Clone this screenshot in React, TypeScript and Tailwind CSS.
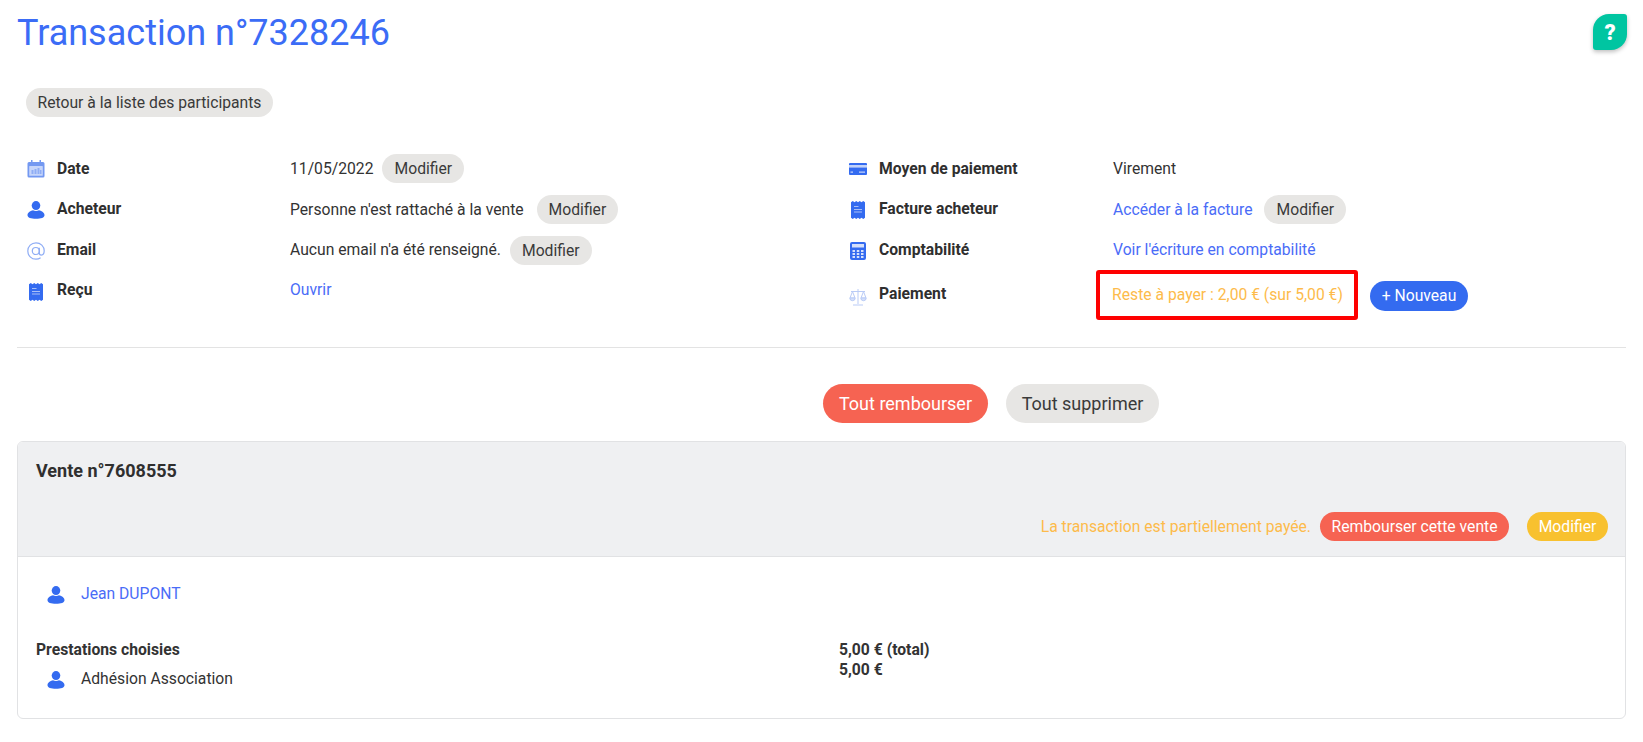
import React from "react";

const blue = "#346bf0";
const light = "#8fadf5";

function UserIcon({ className = "" }: { className?: string }) {
  return (
    <svg viewBox="0 0 18 18" className={className}>
      <ellipse cx="9" cy="4.6" rx="4.3" ry="4.5" fill={blue} />
      <path d="M0.5 14.2C0.5 11.2 4 9.8 6 9.300C7.500 10.300 10.500 10.300 12 9.300C14 9.800 17.500 11.200 17.500 14.200C17.500 16.600 14 17.800 9 17.800C4 17.800 0.500 16.600 0.500 14.200Z" fill={blue} />
    </svg>
  );
}
function CalendarIcon() {
  return (
    <svg viewBox="0 0 18 18" className="w-[18px] h-[18px]">
      <path d="M2 2H4V0h1.500v2h7V0H14v2h2a1.500 1.500 0 0 1 1.500 1.500V16a1.500 1.500 0 0 1-1.500 1.500H2A1.500 1.500 0 0 1 .5 16V3.500A1.500 1.500 0 0 1 2 2Z" fill="#7398f1" />
      <rect x="2.200" y="6" width="13.600" height="9.800" rx="0.600" fill="#c6d5fa" />
      <path d="M4.500 10h2v4h-2zM7.500 9h2v5h-2zM10.500 8h2v6h-2zM13 10h1.500v4H13z" fill="#8fadf5" />
    </svg>
  );
}
function ReceiptIcon() {
  return (
    <svg viewBox="0 0 14 18" className="w-[14px] h-[18px]">
      <path d="M0 1.200 1.750 0 3.500 1.200 5.250 0 7 1.200 8.750 0 10.500 1.200 12.250 0 14 1.200V16.800L12.250 18 10.500 16.800 8.750 18 7 16.800 5.250 18 3.500 16.800 1.750 18 0 16.800Z" fill={blue} />
      <path d="M3 5h4.500v1H3zM3 8h8v1H3zM3 10.500h8v1H3z" fill="#a9bff6" />
    </svg>
  );
}
function AtIcon() {
  return (
    <svg viewBox="0 0 18 18" className="w-[18px] h-[18px]" fill="none" stroke={light} strokeWidth="1.200">
      <path d="M12.300 5.800v5.300c0 1.300.8 2 1.800 2 1.700 0 3.100-1.800 3.100-4.300C17.200 4.300 13.600 .8 9 .8S.8 4.400.8 9s3.600 8.200 8.200 8.200c1.800 0 3.300-.5 4.600-1.400" />
      <circle cx="8.800" cy="9" r="3.500" />
    </svg>
  );
}
function CardIcon() {
  return (
    <svg viewBox="0 0 18 12" className="w-[18px] h-[12px]">
      <path d="M1 0h16a1 1 0 0 1 1 1v1H0V1a1 1 0 0 1 1-1Z" fill={blue} />
      <path d="M0 2h18v2.500H0z" fill="#c2d2f9" />
      <path d="M0 4.500h18V11a1 1 0 0 1-1 1H1a1 1 0 0 1-1-1Z" fill={blue} />
      <path d="M1.500 8.500h2.500v1.200H1.500zM10 8.500h6v1.200h-6z" fill="#c2d2f9" />
    </svg>
  );
}
function CalcIcon() {
  return (
    <svg viewBox="0 0 16 18" className="w-[16px] h-[18px]">
      <rect width="16" height="18" rx="2" fill={blue} />
      <rect x="2" y="2" width="12" height="3.500" fill="#d5e0fb" />
      <path d="M2.500 8h2.500v2H2.500zM6.800 8h2.500v2H6.800zM11 8h2.500v2H11zM2.500 11h2.500v2H2.500zM6.800 11h2.500v2H6.800zM11 11h2.500v2H11zM2.500 14h2.500v2H2.500zM6.800 14h2.500v2H6.800zM11 14h2.500v2H11z" fill="#d5e0fb" />
    </svg>
  );
}
function ScaleIcon() {
  return (
    <svg viewBox="0 0 18 18" className="w-[18px] h-[18px]" fill="none" stroke="#b9cbf6" strokeWidth="1">
      <path d="M9 1v15M2 3.500h14M4 17h10" />
      <path d="M3.500 3.500 1 10h5ZM14.500 3.500 12 10h5Z" />
      <path d="M.8 10a2.700 2.700 0 0 0 5.400 0ZM11.800 10a2.700 2.700 0 0 0 5.400 0Z" fill="#d5e0fb" />
    </svg>
  );
}

function Pill({ children, className = "" }: { children: React.ReactNode; className?: string }) {
  return (
    <span className={`inline-flex items-center justify-center rounded-full whitespace-nowrap ${className}`}>
      {children}
    </span>
  );
}
function Edit() {
  return <Pill className="h-[29px] px-3 bg-[#e7e6e4] text-[#3a3a3a]">Modifier</Pill>;
}

function Row({ icon, label, shift = "" }: { icon: React.ReactNode; label: string; shift?: string }) {
  return (
    <div className="flex items-center">
      <div className="w-[30px] flex justify-center pr-[12px] shrink-0 mt-[2px]">{icon}</div>
      <div className={`font-bold text-[#2f2f2f] ${shift}`}>{label}</div>
    </div>
  );
}

export default function App() {
  return (
    <div className="relative min-h-[742px] bg-white text-[15.7px] text-[#333333] font-['Roboto',sans-serif] overflow-hidden">
      <div className="px-[17px]">
        <h1 className="pt-[11px] text-[36px] leading-[44px] text-[#3b6cf6]">Transaction n°7328246</h1>

        <div className="mt-[33px] ml-[9px]">
          <Pill className="h-[29px] w-[247px] bg-[#e7e6e4] text-[#3a3a3a]">Retour à la liste des participants</Pill>
        </div>

        <div className="mt-[31px] ml-[10px] flex">
          <div className="w-[822px] grid grid-cols-[263px_1fr] grid-rows-[41px_41px_41px_41px] items-center">
            <Row icon={<CalendarIcon />} label="Date" />
            <div className="flex items-center gap-[9px]"><span>11/05/2022</span><Edit /></div>
            <Row icon={<UserIcon className="w-[18px] h-[18px]" />} label="Acheteur" shift="-mt-[2px]" />
            <div className="flex items-center gap-[13px]"><span>Personne n'est rattaché à la vente</span><Edit /></div>
            <Row icon={<AtIcon />} label="Email" shift="-mt-[2px]" />
            <div className="flex items-center gap-[9px]"><span className="-mt-[2px]">Aucun email n'a été renseigné.</span><Edit /></div>
            <Row icon={<ReceiptIcon />} label="Reçu" shift="-mt-[3px]" />
            <a className="text-[#4a6cf7] -mt-[3px]">Ouvrir</a>
          </div>
          <div className="grid grid-cols-[264px_1fr] grid-rows-[41px_41px_41px_50px] items-center">
            <Row icon={<CardIcon />} label="Moyen de paiement" />
            <span>Virement</span>
            <Row icon={<ReceiptIcon />} label="Facture acheteur" shift="-mt-[2px]" />
            <div className="flex items-center gap-3"><a className="text-[#4a6cf7]">Accéder à la facture</a><Edit /></div>
            <Row icon={<CalcIcon />} label="Comptabilité" shift="-mt-[2px]" />
            <a className="text-[#4a6cf7] -mt-[2px]">Voir l'écriture en comptabilité</a>
            <Row icon={<ScaleIcon />} label="Paiement" shift="-mt-[5px]" />
            <div className="flex items-center gap-[12px]">
              <span className="h-[50px] w-[262px] -ml-[17px] -mt-[2px] pl-[1px] pb-[1px] flex items-center justify-center border-[4px] border-[#fe0000] rounded-[3px] text-[#fdbb4b]">
                Reste à payer : 2,00 € (sur 5,00 €)
              </span>
              <Pill className="h-[30px] w-[98px] bg-[#346bf0] text-white">+ Nouveau</Pill>
            </div>
          </div>
        </div>

        <div className="mt-[26px] border-t border-[#e3e3e3]" />

        <div className="mt-[36px] ml-[806px] flex gap-[18px]">
          <Pill className="h-[39px] w-[165px] bg-[#f66352] text-white text-[18px]">Tout rembourser</Pill>
          <Pill className="h-[39px] w-[153px] bg-[#e7e6e4] text-[#3a3a3a] text-[18px]">Tout supprimer</Pill>
        </div>

        <div className="mt-[18px] border border-[#e1e2e4] rounded-[6px] h-[278px] overflow-hidden">
          <div className="h-[115px] bg-[#eff0f2] border-b border-[#e1e2e4] px-[18px] pt-[15px] flex flex-col justify-between pb-[15px]">
            <div className="font-bold text-[18px] text-[#2f2f2f]">Vente n°7608555</div>
            <div className="flex justify-end items-center -mr-[1px]">
              <span className="text-[#fdbb4b] mr-[9px]">La transaction est partiellement payée.</span>
              <Pill className="h-[29px] w-[189px] bg-[#f66352] text-white">Rembourser cette vente</Pill>
              <Pill className="h-[29px] w-[81px] ml-[18px] bg-[#f8c12f] text-white">Modifier</Pill>
            </div>
          </div>
          <div className="px-[18px]">
            <div className="flex items-center mt-[25px] pl-[11px]">
              <UserIcon className="w-[18px] h-[18px] mt-[2px]" />
              <a className="ml-[16px] text-[#4a6cf7]">Jean DUPONT</a>
            </div>
            <div className="mt-[34px] flex">
              <div className="w-[803px]">
                <div className="font-bold leading-[20px]">Prestations choisies</div>
                <div className="flex items-center mt-[7px] pl-[11px]">
                  <UserIcon className="w-[18px] h-[18px] mt-[3px]" />
                  <span className="ml-[16px]">Adhésion Association</span>
                </div>
              </div>
              <div className="font-bold leading-[20px]">
                <div>5,00 € (total)</div>
                <div>5,00 €</div>
              </div>
            </div>
          </div>
        </div>
      </div>

      <div className="absolute left-[1593px] top-[14px] w-[34px] h-[36px] bg-[#00c5a1] rounded-tl-[16px] rounded-br-[16px] rounded-tr-[3px] rounded-bl-[3px] shadow-[0_2px_4px_rgba(0,0,0,0.25)] flex items-center justify-center text-white font-black text-[22px]">?</div>
    </div>
  );
}
